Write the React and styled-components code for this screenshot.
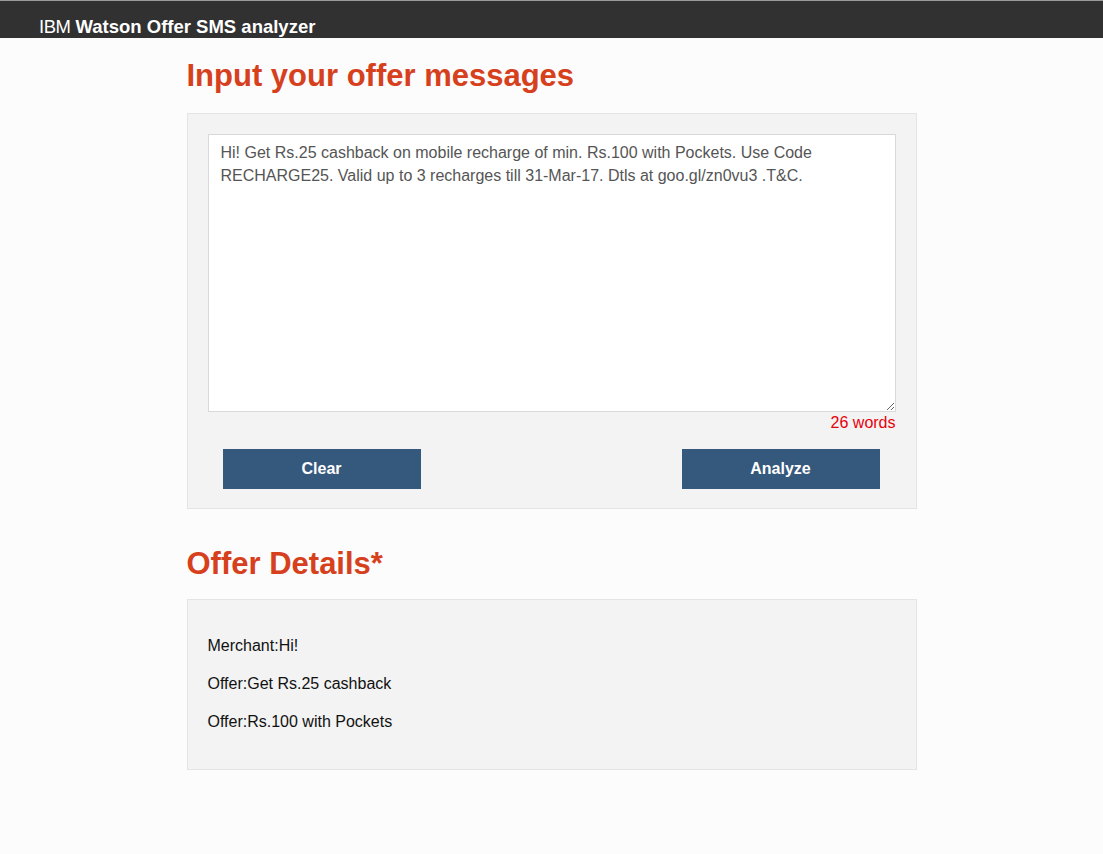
import React, { Component } from "react";
import styled, { createGlobalStyle } from "styled-components";

const message =
  "Hi! Get Rs.25 cashback on mobile recharge of min. Rs.100 with Pockets. Use Code RECHARGE25. Valid up to 3 recharges till 31-Mar-17. Dtls at goo.gl/zn0vu3 .T&C.";

const details = [
  { label: "Merchant", value: "Hi!" },
  { label: "Offer", value: "Get Rs.25 cashback" },
  { label: "Offer", value: "Rs.100 with Pockets" },
];

class App extends Component {
  constructor(props) {
    super(props);
    this.state = { text: message };
  }

  render() {
    const { text } = this.state;
    const words = text.trim() ? text.trim().split(/\s+/).length : 0;

    return (
      <>
        <GlobalStyle />
        <Header>
          <Light>IBM</Light>&nbsp;<Bold>Watson Offer SMS analyzer</Bold>
        </Header>
        <Main>
          <Heading>Input your offer messages</Heading>
          <Panel>
            <TextArea
              spellCheck={false}
              value={text}
              onChange={(e) => this.setState({ text: e.target.value })}
            />
            <WordCount>{`${words} words`}</WordCount>
            <ButtonRow>
              <Button onClick={() => this.setState({ text: "" })}>Clear</Button>
              <Button>Analyze</Button>
            </ButtonRow>
          </Panel>
          <Heading second>Offer Details*</Heading>
          <ResultPanel>
            {details.map(({ label, value }, i) => (
              <Line key={i}>{`${label}:${value}`}</Line>
            ))}
          </ResultPanel>
        </Main>
      </>
    );
  }
}

const GlobalStyle = createGlobalStyle`
body {
  margin: 0;
  background: #fcfcfc;
  font-family: "Liberation Sans", Arial, sans-serif;
}
`;
const Header = styled.div`
height: 38px;
background: #313131;
border-top: 1px solid #9a9a9a;
box-sizing: border-box;
padding: 16px 0 0 39px;
color: #fff;
font-size: 18.5px;
line-height: 20px;
overflow: hidden;
`;
const Light = styled.span`
font-weight: 300;
letter-spacing: -0.5px;
`;
const Bold = styled.span`
font-weight: 700;
`;
const Main = styled.div`
width: 730px;
margin: 0 auto;
padding-bottom: 80px;
`;
const Heading = styled.h1`
font-size: 31px;
font-weight: 700;
color: #d6401c;
margin: ${(props) => (props.second ? "38px 0 18px" : "21px 0 20px")};
line-height: 34px;
`;
const Panel = styled.div`
background: #f3f3f3;
border: 1px solid #e4e4e4;
padding: 20px 20px 19px;
`;
const TextArea = styled.textarea`
display: block;
width: 688px;
height: 278px;
box-sizing: border-box;
border: 1px solid #d9d9d9;
background: #fff;
padding: 6px 12px;
font-family: "Liberation Sans", Arial, sans-serif;
font-size: 16px;
line-height: 23px;
color: #555;
outline: none;
margin: 0;
`;
const WordCount = styled.div`
text-align: right;
color: #e8000b;
font-size: 16px;
line-height: 18px;
margin-top: 2px;
`;
const ButtonRow = styled.div`
display: flex;
justify-content: space-between;
padding: 0 16px 0 15px;
margin-top: 17px;
`;
const Button = styled.button`
width: 198px;
height: 40px;
border: none;
background: #35587d;
color: #fff;
font-family: "Liberation Sans", Arial, sans-serif;
font-size: 16px;
font-weight: 700;
cursor: pointer;
`;
const ResultPanel = styled.div`
background: #f3f3f3;
border: 1px solid #e4e4e4;
padding: 37px 20px 38px;
display: flex;
flex-direction: column;
gap: 20px;
`;
const Line = styled.p`
margin: 0;
font-size: 16px;
line-height: 18px;
color: #111;
`;

export default App;
